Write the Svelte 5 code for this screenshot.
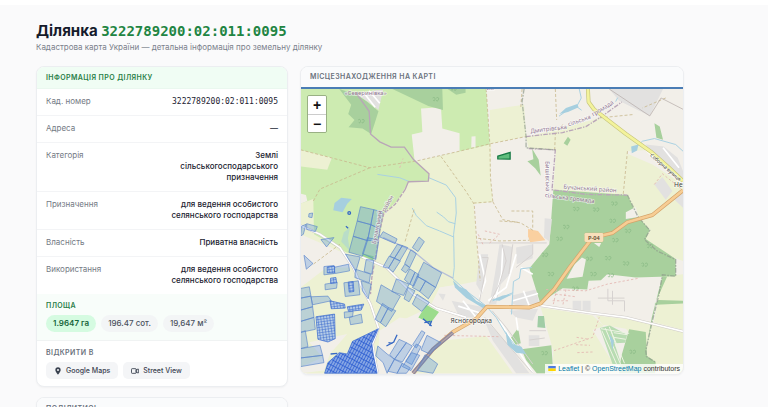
<!--
  Parcel page: facts about one cadastral parcel on the left,
  its place on the map on the right.
-->
<script lang="ts">
  const cadNumber = '3222789200:02:011:0095';

  const facts = [
    { label: 'Кад. номер', value: cadNumber, mono: true },
    { label: 'Адреса', value: '—' },
    { label: 'Категорія', value: 'Землі сільськогосподарського призначення' },
    { label: 'Призначення', value: 'для ведення особистого селянського господарства' },
    { label: 'Власність', value: 'Приватна власність' },
    { label: 'Використання', value: 'для ведення особистого селянського господарства' },
  ];

  const areas = ['1.9647 га', '196.47 сот.', '19,647 м²'];

  // Map units: three per screen pixel.
  const parcels = [
    '182,357 222,366 213,411 172,400',
    '222,366 249,373 240,424 213,411',
    '172,400 213,411 203,459 160,446',
    '213,411 240,424 236,458 203,459',
    '160,446 203,459 188,506 147,494',
    '203,450 237,458 228,516 188,498',
    '20,408 52,417 46,432 20,425',
    '63,456 102,450 80,478',
    '12,503 39,528 19,545',
    '137,500 181,508 168,552',
    '199,516 222,518 216,560 193,552',
    '167,545 212,560 208,586 165,570',
    '185,580 214,590 205,634 188,610',
    '100,540 146,530 149,550 106,558',
    '72,537 102,534 104,558 72,562',
    '75,590 112,584 110,602 76,607',
    '132,586 176,580 180,622 136,627',
    '2,603 28,598 33,626 2,632',
    '2,632 33,626 38,658 2,668',
    '2,668 38,658 42,690 2,702',
    '2,702 42,690 46,726 2,735',
    '2,735 16,730 24,778 2,784',
    '33,628 84,626 94,640 38,652',
    '2,784 60,774 68,804 2,812',
    '2,812 68,804 72,826 2,838',
    '148,690 184,680 188,706 152,712',
    '133,674 160,672 158,688 134,692',
    '250,432 292,454 286,468 240,448',
    '358,448 374,462 355,492 338,480',
    '293,470 308,474 284,512 270,506',
    '308,474 324,480 300,520 284,512',
    '268,506 284,512 266,542 250,538',
    '284,512 302,520 280,554 266,542',
    '333,487 350,498 330,540 315,528',
    '315,530 330,540 318,556 305,547',
    '372,524 426,556 408,600 352,566',
    '352,566 378,580 360,612 338,600',
    '378,580 408,600 386,634 360,612',
    '330,544 346,554 330,590 314,576',
    '346,554 358,562 342,596 330,590',
    '290,574 328,590 312,624 276,612',
    '244,592 302,626 276,672 230,642',
    '325,600 346,610 328,643 313,634',
    '352,620 389,645 366,672 338,650',
    '248,648 266,660 242,706 226,696',
    '266,660 288,670 258,718 242,706',
    '366,730 376,736 350,782 339,772',
    '298,756 320,766 284,816 270,802',
    '320,766 338,776 308,824 284,816',
    '350,770 364,778 336,832 318,822',
    '382,744 424,766 390,800 364,788',
    '336,796 360,804 334,850 308,838',
    '376,802 414,830 400,858 352,850',
    '234,776 262,800 284,816 262,858 250,826 228,806',
    '284,816 308,828 292,858 264,852',
    '308,828 332,842 320,858 292,858',
    '4,416 18,410 10,440 2,445',
    '27,378 38,376 36,390 26,388',
  ];

  // Blocks cut into many small plots.
  const plots = [
    '48,688 104,680 106,754 84,764 54,756',
    '84,826 118,796 142,800 158,762 236,724 216,768 220,800 232,858 74,858',
    '90,640 134,650 136,662 94,664',
    '142,658 192,650 184,668 146,672',
    '145,584 160,582 162,612 148,614',
    '82,538 104,536 104,556 82,556',
    '92,572 108,570 110,586 92,588',
  ];

  const trees = [
    [830, 366], [890, 368], [945, 350], [800, 420], [940, 402], [986, 432],
    [780, 456], [948, 460], [736, 504], [870, 516], [926, 514], [980, 530],
    [1036, 534], [754, 562], [882, 562], [828, 606], [934, 566], [1052, 478],
    [184, 102], [408, 36], [462, 4], [1000, 796], [735, 800],
  ];
</script>

{#snippet pin()}
  <svg class="icon" viewBox="0 0 24 24" aria-hidden="true">
    <path
      fill="currentColor"
      fill-rule="evenodd"
      d="M12 1a8 8 0 0 0-8 8c0 6 8 14 8 14s8-8 8-14a8 8 0 0 0-8-8Zm0 5a3 3 0 1 1 0 6 3 3 0 0 1 0-6Z"
    />
  </svg>
{/snippet}

{#snippet camera()}
  <svg class="icon" viewBox="0 0 24 24" aria-hidden="true">
    <g fill="none" stroke="currentColor" stroke-width="2.6" stroke-linejoin="round">
      <rect x="1.500" y="5" width="14" height="14" rx="2" />
      <path d="M15.500 8 22 6v12l-6.500-2Z" />
    </g>
  </svg>
{/snippet}

<main class="page">
  <header class="heading">
    <h1>Ділянка <span class="number">{cadNumber}</span></h1>
    <p>Кадастрова карта України — детальна інформація про земельну ділянку</p>
  </header>

  <div class="columns">
    <div class="side">
      <section class="card">
        <h2 class="card-title accent">Інформація про ділянку</h2>
        <dl class="facts">
          {#each facts as fact}
            <div class="fact">
              <dt>{fact.label}</dt>
              <dd class:mono={fact.mono}>{fact.value}</dd>
            </div>
          {/each}
        </dl>
        <div class="block area">
          <h3>Площа</h3>
          <ul class="pills">
            {#each areas as area, i}
              <li class="pill" class:main={i === 0}>{area}</li>
            {/each}
          </ul>
        </div>
        <div class="block">
          <h3>Відкрити в</h3>
          <div class="links">
            <a class="open" href="#google-maps">{@render pin()}Google Maps</a>
            <a class="open" href="#street-view">{@render camera()}Street View</a>
          </div>
        </div>
      </section>

      <section class="card">
        <h2 class="card-title">Поділитись</h2>
      </section>
    </div>

    <section class="card">
      <h2 class="card-title on-map">Місцезнаходження на карті</h2>
      <div class="map">
        <svg class="canvas" viewBox="3 3 1149 858" role="img" aria-label="Карта">
          <defs>
            <pattern id="grid" width="9" height="8" patternUnits="userSpaceOnUse" patternTransform="rotate(-8)">
              <rect width="9" height="8" fill="#b4cbe6" />
              <path d="M0 0H9M0 0V8" stroke="#3566cc" stroke-width="3" />
            </pattern>
            <pattern id="dense" width="8" height="15" patternUnits="userSpaceOnUse" patternTransform="rotate(28)">
              <rect width="8" height="15" fill="#86a6e4" />
              <path d="M0 0H8M0 0V15" stroke="#2759d0" stroke-width="4" />
            </pattern>
            <path id="tree" d="M-9-6c5-4 8 0 7 5s-4 5-5 1M2-6c6-4 9 1 6 6s-6 4-5 0" />
          </defs>

          <rect width="1155" height="864" fill="#f2efe9" />

          <!-- fields -->
          <g fill="#edf1d3">
            <path d="M0 190 348 222 575 168 573 270 580 342 522 350 540 580 478 592 420 600 390 660 240 730 230 858 0 858Z" />
            <path d="M571 66 674 50 680 146 571 168Z" />
            <path d="M680 148 880 96 912 84 1054 186 985 190 972 322 762 306 770 186 688 182Z" />
            <path d="M972 322 985 198 1060 230 1152 290 1152 318 1060 384 1020 390Z" />
            <path d="M1020 395 1060 382 1152 312V520L1080 494 1036 456 1054 426Z" />
            <path d="M412 762 560 746 640 858H340L404 786Z" />
            <path d="M724 660 880 684 914 716 880 728 960 858H760L762 790Z" />
            <path d="M890 684 1062 704 1040 790 980 724 910 712Z" />
            <path d="M1090 566 1152 560V728L1064 704Z" />
            <path d="M1062 704 1152 732V858H1060L1040 790Z" />
          </g>
          <path fill="#f2efe9" d="M2 440 140 500 160 540 80 540 2 600ZM28 765 142 740 90 800 72 850 2 858V840L68 810ZM240 730 300 690 370 700 400 760 350 800 300 740 240 790ZM420 600 480 590 500 640 470 700 400 660Z" />

          <!-- meadows -->
          <path fill="#cdebb1" d="M2 3H560L571 170 348 220 388 258 386 280 326 282 296 335 252 378 228 510 140 495 42 440 40 334 2 348Z" />
          <path fill="#edf1d3" d="M2 186 96 210 82 246 2 236Z" />
          <path fill="#f2efe9" d="M364 62 424 58 428 122 480 136V190L345 222 336 140 368 132ZM516 146 528 145V178L515 180ZM2 318 18 322 22 340 2 348Z" />

          <!-- woods -->
          <g fill="#a8d09d">
            <path d="M118 3 172 20 200 40 236 70 224 108 214 138 188 122 146 118 164 96 145 78 154 50Z" />
            <path d="M278 3H428L430 66 386 54Z" />
            <path d="M444 3H498V14L470 20Z" />
            <path d="M762 306 985 322 1014 384 1052 426 1040 454 1130 514 1130 566 1010 570 924 560 905 578 868 580 864 606 790 602 722 646 690 542 750 470Z" />
            <path d="M698 182 718 216 724 264 708 242 684 220 702 214ZM1066 106 1082 116 1092 156 1072 150ZM793 166 806 147 814 156 804 174Z" />
            <path d="M1090 566 1104 568 1066 652 1078 638 1152 640V648L1070 652 1040 790 1058 690Z" />
            <path d="M990 726 1040 734 1044 806 1070 824 1068 858H960L966 808Z" />
            <path d="M656 722 664 768 644 774 634 752ZM666 786 756 774 762 858H712L680 818Z" />
            <path d="M716 686 734 686 738 722 714 720Z" fill="#a0cda5" />
            <path d="M902 722 932 714 984 742 978 766 946 768 968 836 940 830Z" fill="#b8dcb2" />
          </g>
          <path fill="#f2efe9" d="M848 510 860 516 850 568 802 574 826 530ZM980 374 1010 358 1018 388 980 394ZM884 466 906 466 900 478Z" />
          <path fill="none" stroke="#eef4e4" stroke-width="3" d="M908 730 952 830M918 722 964 830M930 718 976 828M944 736 984 742M944 750 980 756M905 724 990 738M952 780 936 730" />
          <path fill="#9bdc8c" d="M380 652 418 674 392 708 356 690ZM188 498 222 506 220 520 184 512Z" />
          <path fill="#fad0a0" d="M686 424 716 430 738 458 692 464 686 446Z" />
          <g fill="none" stroke="#85b782" stroke-width="2">
            {#each trees as [x, y]}
              <use href="#tree" {x} {y} />
            {/each}
          </g>

          <!-- built-up land -->
          <g fill="#e2e1e0">
            <path d="M930 3H1092L1052 84 960 38Z" />
            <path d="M172 20 230 6H250L236 66 208 44Z" />
            <path d="M736 392 758 394 750 462 734 450Z" />
            <path d="M600 470 640 478 632 560 604 590 590 650 570 650 586 560ZM650 480 700 470 700 512 652 530ZM540 500 566 500 548 620 530 590Z" />
            <path d="M638 624 708 606 720 646 660 656 640 650ZM630 670 716 664 700 700 650 690ZM456 640 556 660 520 690 480 690ZM416 618 438 620 430 640ZM552 692 620 764 690 858H650L580 760Z" />
            <path d="M820 640H846V672H820ZM850 640H874V670H850ZM688 744H720V776H688Z" />
            <path d="M1040 170 1094 176 1136 210 1152 250V290L1060 210ZM1120 330 1152 308V360ZM1066 290 1090 268 1120 310 1100 336Z" />
          </g>
          <g fill="none" stroke="#fff" stroke-width="5">
            <path d="M190 12 226 58M208 8 240 46M476 656 540 676M490 640 530 690M640 640 716 618M672 610 690 656M650 690 656 730M600 700 700 858M1040 186 1150 286M1092 180 1140 240" />
            <path d="M540 500 558 580 540 630M610 480 606 560 586 640M650 500 620 600 566 640M664 540 700 560" />
          </g>
          <g fill="none" stroke="#d6d2d0" stroke-width="3">
            <path d="M536 466H742M608 470 620 520 600 590 570 648M640 470 628 560M700 470V500L650 540M548 510 566 510 540 640M690 730 740 730M690 758 736 752M926 604V640H976V672M896 632H976M940 610V652M556 690 640 790 700 858M578 670 620 720 700 830" />
          </g>

          <!-- water -->
          <g fill="none" stroke="#a9d1e2" stroke-width="3" stroke-linecap="round">
            <path d="M234 260 300 270 330 282M388 270 440 292 468 330 470 376 462 440 464 540 460 574 500 610 560 656 590 690 620 740 660 790" />
            <path d="M338 362 350 384 380 414 420 430 462 448M412 374 432 388 446 402 466 408" />
            <path d="M840 3 846 30 832 56 846 66M780 84 806 66 834 54M1000 190 1030 160 1066 152 1130 170 1152 190M950 40 955 30" />
            <path d="M696 540 664 544 660 572 642 582 640 616 580 640M640 616 636 680" />
          </g>
          <g fill="#a6cfdf">
            <path d="M104 346 124 330 156 334 142 348 128 374 100 368Z" />
            <path d="M460 578 480 598 500 606 530 640 562 656 550 662 500 632 466 600Z" />
            <path d="M618 730 640 770 666 778 680 800 650 796 624 772Z" />
            <path d="M780 78 800 60 834 48 838 58 806 72ZM996 176 1018 170 1014 188 998 196ZM576 638 610 624 640 620 600 640Z" />
            <path d="M930 740 944 760 940 790Z" />
            <path d="M124 462 132 434 150 420 144 452 150 490Z" opacity="0.500" />
          </g>

          <!-- tracks -->
          <g fill="none" stroke="#c9b98f" stroke-width="2.500" stroke-dasharray="9 6">
            <path d="M2 186 210 240 348 220 480 190 571 168 680 146M210 240 60 304 40 340" />
            <path d="M560 3 571 168 573 270 580 342M424 206 500 312 524 350 530 440 542 580M343 366 316 462M985 190 972 322M768 3 772 96M790 110 768 140 766 186M668 3 664 60" />
            <path d="M580 342 610 396 664 406 704 430M522 346 580 342M536 452 600 460 690 458M600 400 660 404M636 370H700V420M1100 30 1030 60M1000 80 900 90M120 470 40 530" />
          </g>
          <g fill="none" stroke="#e3b5b0" stroke-width="2.500" stroke-dasharray="7 6">
            <path d="M740 606 860 610 924 590 1020 572M764 790 880 750 900 690M434 744 600 748M768 620 830 628M760 640 812 640M772 606 762 650M800 606 790 656M832 750 870 756M830 772 872 774M834 796 880 794M1066 290 1090 258 1150 306" />
            <path d="M300 240 310 212M556 430 600 440 566 470M536 440 550 470" />
          </g>

          <!-- borders -->
          <g fill="none" stroke="#b9a5b8" stroke-width="4">
            <path d="M172 20 208 70 212 138 240 162 274 178 314 178 342 216 388 258 386 280 326 282 316 306" />
            <path d="M316 306 286 350 252 378 240 430 226 516 216 570 212 620" stroke-dasharray="12 4" />
            <path d="M680 146 790 134 860 116 910 84 968 42M688 182 768 186 758 306 860 320 985 322" stroke-dasharray="14 4 4 4" />
          </g>
          <g fill="none" stroke="#8f9b8c" stroke-width="4" stroke-opacity="0.700">
            <path d="M674 3 668 40 680 146V180L768 186M985 322 1016 386 1052 428 1036 456 1074 490 1130 516V566L1090 562 1080 620 1060 700 1040 790 1042 808 1068 824" stroke-dasharray="14 4 5 4" />
            <path d="M930 3 1052 84 1086 30 1152 64" stroke="#b5aaa8" stroke-width="3" />
          </g>

          <!-- minor roads -->
          <g fill="none" stroke-linejoin="round">
            <path d="M2 414 60 440 120 480 160 540 182 590 212 650 236 722 218 770 226 820 234 858" stroke="#cfc9cc" stroke-width="8" />
            <path d="M2 414 60 440 120 480 160 540 182 590 212 650 236 722 218 770 226 820 234 858" stroke="#fff" stroke-width="5" />
            <path d="M186 508 260 540 340 620 410 662 500 690M720 654 870 676 980 690 1062 710 1152 732" stroke="#cfcbc8" stroke-width="8" />
            <path d="M186 508 260 540 340 620 410 662 500 690M720 654 870 676 980 690 1062 710 1152 732" stroke="#fff" stroke-width="5" />
            <path d="M250 450 340 490 400 540 460 572" stroke="#b7c0d8" stroke-width="4" />
          </g>

          <!-- main roads -->
          <g fill="none" stroke-linejoin="round">
            <path d="M866 3 868 42 884 64 980 138 1056 192 1110 240 1152 280" stroke="#c8c67e" stroke-width="12" />
            <path d="M866 3 868 42 884 64 980 138 1056 192 1110 240 1152 280" stroke="#f3f39b" stroke-width="8" />
            <path d="M340 858 400 786 460 734 530 694 562 658 690 660 724 648 764 606 812 538 880 450 940 436 984 404 1060 382 1152 308" stroke="#d3a36a" stroke-width="12" />
            <path d="M340 858 400 786 460 734 530 694 562 658 690 660 724 648 764 606 812 538 880 450 940 436 984 404 1060 382 1152 308" stroke="#f7cd94" stroke-width="8" />
            <path d="M340 858 400 786 460 736" stroke="#8b86a0" stroke-width="11" />
            <path d="M340 858 400 786 460 736" stroke="#b5a6a6" stroke-width="4" />
          </g>

          <!-- cadastral parcels -->
          <g fill="#4a88dc" fill-opacity="0.300" stroke="#5c87cc" stroke-width="2">
            {#each parcels as points}
              <polygon {points} />
            {/each}
          </g>
          {#each plots as points, i}
            <polygon {points} fill={i === 1 ? 'url(#dense)' : 'url(#grid)'} stroke="#3567cf" stroke-width="2" />
          {/each}
          <g fill="none" stroke="#3769c4" stroke-width="4">
            <circle cx="148" cy="376" r="4" />
            <path d="M138 416 145 422M292 742 282 764 260 776M266 766 278 768M370 694 396 716M374 706 392 702M396 700 390 716M92 800 112 798" />
          </g>
          <path fill="#5fbd7d" stroke="#177a45" stroke-width="4" d="M595 205 632 194V214L595 213Z" />

          <!-- labels -->
          <g class="names">
            <g class="area-name">
              <text x="134" y="21">«Северинівка»</text>
              <text x="792" y="303" transform="rotate(4 792 303)">Бучанський район</text>
              <text x="736" y="328" transform="rotate(7 736 328)">сільська громада</text>
              <text x="738" y="220" transform="rotate(89 738 220)">Бишівська</text>
              <text x="694" y="136" transform="rotate(-7 694 136)">Дмитрівська</text>
              <text x="808" y="116" transform="rotate(-20 808 116)">сільська</text>
              <text x="882" y="86" transform="rotate(-32 882 86)">громада</text>
              <text x="228" y="470" transform="rotate(-79 228 470)">Бучанський</text>
              <text x="256" y="374" transform="rotate(-61 256 374)">район</text>
            </g>
            <text class="street" x="1052" y="204" transform="rotate(41 1052 204)">Соборна вулиця</text>
            <text class="town" x="453" y="706">Ясногородка</text>
            <text class="town" x="1125" y="298">Не</text>
            <text class="area-name" x="562" y="5">ик</text>
            <rect x="856" y="436" width="56" height="27" rx="4" fill="#f8dfba" stroke="#dcae76" stroke-width="2" />
            <text class="route" x="884" y="457">Р-04</text>
          </g>
        </svg>

        <div class="zoom">
          <button type="button" aria-label="Наблизити">+</button>
          <button type="button" aria-label="Віддалити">−</button>
        </div>

        <p class="credit">
          <svg class="flag" viewBox="0 0 12 8" aria-hidden="true">
            <path fill="#4c7be1" d="M0 0h12v4H0z" />
            <path fill="#ffd500" d="M0 4h12v4H0z" />
          </svg>
          <a href="#leaflet">Leaflet</a> | © <a href="#osm">OpenStreetMap</a> contributors
        </p>
      </div>
    </section>
  </div>
</main>

<style>
  :global(body) {
    margin: 0;
    overflow: hidden;
    background: #fafafb;
    font-family: Inter, "Noto Sans", sans-serif;
    color: #1b2230;
  }

  h1,
  h2,
  h3,
  p,
  dl,
  dd,
  ul {
    margin: 0;
    padding: 0;
  }

  .page {
    border-top: 5px solid #fff;
    padding: 16px 84px 0 36px;
  }

  .heading {
    margin-bottom: 12px;
  }

  h1 {
    font-size: 15px;
    line-height: 20px;
    font-weight: 700;
    color: #151b2b;
  }

  .number {
    font-family: "DejaVu Sans Mono", monospace;
    font-size: 14px;
    color: #1f8543;
  }

  .heading p {
    font-size: 8px;
    line-height: 13px;
    color: #7b818b;
  }

  .columns {
    display: grid;
    grid-template-columns: 252px minmax(0, 1fr);
    gap: 12px;
    align-items: start;
  }

  .side {
    display: grid;
    gap: 10px;
  }

  .card {
    overflow: hidden;
    border: 1px solid #eceef1;
    border-radius: 8px;
    background: #fff;
    box-shadow: 0 1px 2px rgb(0 0 0 / 4%);
  }

  .card-title {
    padding: 0 9px;
    border-bottom: 1px solid #eceef1;
    background: #fafbfc;
    font-size: 7px;
    line-height: 21px;
    font-weight: 600;
    letter-spacing: 0.06em;
    text-transform: uppercase;
    color: #6b727d;
  }

  .card-title.accent {
    border-color: #eaf8ef;
    background: #f0fdf4;
    color: #2a8049;
  }

  .card-title.on-map {
    border-bottom: 2px solid #4a7db5;
    line-height: 20px;
  }

  .fact {
    display: flex;
    justify-content: space-between;
    gap: 12px;
    padding: 7px 9px 8px;
    border-bottom: 1px solid #f3f4f6;
    font-size: 8px;
    line-height: 11px;
  }

  .fact:last-child {
    border-bottom: 0;
  }

  dt {
    color: #747a84;
  }

  dd {
    max-width: 116px;
    font-weight: 500;
    text-align: right;
  }

  .mono {
    font-family: "DejaVu Sans Mono", monospace;
    font-weight: 400;
  }

  .block {
    padding: 7px 9px;
  }

  .area {
    padding-bottom: 8px;
    border-bottom: 1px solid #f0f3f3;
    background: #f8fdfa;
  }

  h3 {
    margin-bottom: 5px;
    font-size: 7px;
    line-height: 9px;
    font-weight: 600;
    letter-spacing: 0.06em;
    text-transform: uppercase;
    color: #6b727d;
  }

  .area h3 {
    color: #2a8049;
  }

  .pills,
  .links {
    display: flex;
    gap: 5px;
    list-style: none;
  }

  .pill {
    padding: 0 7px;
    border-radius: 9px;
    background: #f3f5f6;
    font-size: 8px;
    line-height: 17px;
    font-weight: 500;
    color: #4b525e;
  }

  .pill.main {
    background: #d5fbe1;
    font-weight: 600;
    color: #17653a;
  }

  .open {
    display: flex;
    align-items: center;
    gap: 4px;
    padding: 0 8px;
    border-radius: 5px;
    background: #f4f5f7;
    font-size: 7px;
    line-height: 17px;
    font-weight: 500;
    color: #3a4250;
    text-decoration: none;
  }

  .icon {
    width: 8px;
    height: 8px;
  }

  .map {
    position: relative;
  }

  .canvas {
    display: block;
    width: 100%;
    height: auto;
  }

  .names {
    font-family: "Noto Sans", sans-serif;
    paint-order: stroke;
    stroke: #fff;
    stroke-opacity: 0.6;
    stroke-width: 4px;
  }

  .area-name {
    font-size: 18px;
    fill: #8f7591;
  }

  .street {
    font-size: 15px;
    fill: #44443c;
  }

  .town {
    font-size: 20px;
    fill: #3c3c3c;
  }

  .route {
    font-size: 17px;
    font-weight: 600;
    text-anchor: middle;
    stroke: none;
    fill: #5b4630;
  }

  /* Controls float over the map. */
  .zoom {
    position: absolute;
    top: 6px;
    left: 6px;
    display: grid;
    overflow: hidden;
    border: 1px solid rgb(0 0 0 / 25%);
    border-radius: 2px;
    background-clip: padding-box;
  }

  .zoom button {
    width: 18px;
    height: 18px;
    padding: 0;
    border: 0;
    background: #fff;
    font: bold 14px/18px "Liberation Sans", sans-serif;
    color: #111;
  }

  .zoom button + button {
    border-top: 1px solid #ccc;
  }

  .credit {
    position: absolute;
    right: 0;
    bottom: 0;
    padding: 0 3px;
    background: rgb(255 255 255 / 80%);
    font-family: "Liberation Sans", sans-serif;
    font-size: 7px;
    line-height: 10px;
    color: #333;
  }

  .credit a {
    color: #0078a8;
    text-decoration: none;
  }

  .flag {
    width: 8px;
    height: 5px;
  }
</style>
